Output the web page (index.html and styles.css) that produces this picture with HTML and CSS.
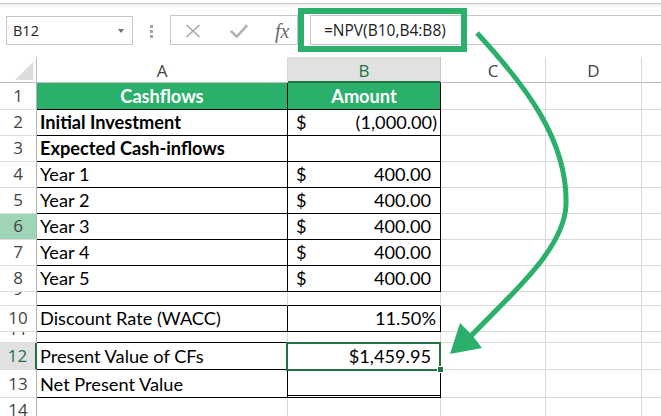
FILE: index.html
```html
<!DOCTYPE html>
<html lang="en">
<head>
<meta charset="utf-8">
<title>NPV</title>
<link rel="stylesheet" href="styles.css">
</head>
<body>
<div class="app">
  <header class="fbar">
    <div class="namebox"><span class="nb-text">B12</span><span class="nb-arrow"></span></div>
    <div class="grip"><i></i><i></i><i></i></div>
    <div class="fbtns">
      <svg class="ico-x" width="16" height="14" viewBox="0 0 16 14"><path d="M1.5 1 L14.5 13 M14.5 1 L1.5 13" fill="none" stroke="#ababab" stroke-width="1.7"/></svg>
      <svg class="ico-ok" width="18" height="14" viewBox="0 0 18 14"><path d="M0.8 7 L6.8 12.6 L17.2 1.2" fill="none" stroke="#b3b3b3" stroke-width="2.6"/></svg>
      <span class="fx">fx</span>
    </div>
    <div class="finput"><span class="ftext">=NPV(B10,B4:B8)</span></div>
    <div class="hl"></div>
  </header>

  <div class="sheet">
    <div class="c ch corner"><span class="tri"></span></div>
    <div class="c ch">A</div>
    <div class="c ch csel">B</div>
    <div class="c ch">C</div>
    <div class="c ch">D</div>
    <div class="c ch"></div>

    <div class="c rh">1</div>
    <div class="c hd">Cashflows</div>
    <div class="c hd">Amount</div>
    <div class="c"></div><div class="c"></div><div class="c"></div>

    <div class="c rh">2</div>
    <div class="c bx bold">Initial Investment</div>
    <div class="c bx acct"><span>$</span><span class="neg">(1,000.00)</span></div>
    <div class="c"></div><div class="c"></div><div class="c"></div>

    <div class="c rh">3</div>
    <div class="c bx bold">Expected Cash-inflows</div>
    <div class="c bx"></div>
    <div class="c"></div><div class="c"></div><div class="c"></div>

    <div class="c rh">4</div>
    <div class="c bx">Year 1</div>
    <div class="c bx acct"><span>$</span><span>400.00</span></div>
    <div class="c"></div><div class="c"></div><div class="c"></div>

    <div class="c rh">5</div>
    <div class="c bx">Year 2</div>
    <div class="c bx acct"><span>$</span><span>400.00</span></div>
    <div class="c"></div><div class="c"></div><div class="c"></div>

    <div class="c rh rhov">6</div>
    <div class="c bx">Year 3</div>
    <div class="c bx acct"><span>$</span><span>400.00</span></div>
    <div class="c"></div><div class="c"></div><div class="c"></div>

    <div class="c rh">7</div>
    <div class="c bx">Year 4</div>
    <div class="c bx acct"><span>$</span><span>400.00</span></div>
    <div class="c"></div><div class="c"></div><div class="c"></div>

    <div class="c rh">8</div>
    <div class="c bx">Year 5</div>
    <div class="c bx acct"><span>$</span><span>400.00</span></div>
    <div class="c"></div><div class="c"></div><div class="c"></div>

    <div class="c rh r9">9</div>
    <div class="c bb"></div>
    <div class="c bb"></div>
    <div class="c"></div><div class="c"></div><div class="c"></div>

    <div class="c rh">10</div>
    <div class="c bx">Discount Rate (WACC)</div>
    <div class="c bx right pct">11.50%</div>
    <div class="c"></div><div class="c"></div><div class="c"></div>

    <div class="c rh">11</div>
    <div class="c bb"></div>
    <div class="c bb"></div>
    <div class="c"></div><div class="c"></div><div class="c"></div>

    <div class="c rh rsel">12</div>
    <div class="c bx">Present Value of CFs</div>
    <div class="c bx right sel">$1,459.95</div>
    <div class="c"></div><div class="c"></div><div class="c"></div>

    <div class="c rh">13</div>
    <div class="c bx">Net Present Value</div>
    <div class="c bx dbl"></div>
    <div class="c"></div><div class="c"></div><div class="c"></div>

    <div class="c rh">14</div>
    <div class="c"></div><div class="c"></div><div class="c"></div><div class="c"></div><div class="c"></div>
  </div>

  <svg class="arrow" width="661" height="416" viewBox="0 0 661 416">
    <path d="M477 33 C 525 85, 568 140, 566 205 C 564 250, 510 295, 468 339" fill="none" stroke="#2ab06b" stroke-width="5"/>
    <polygon points="450,354 460,323 472,335 482,348" fill="#2ab06b"/>
  </svg>
</div>
</body>
</html>
```

FILE: styles.css
```css
html, body {
  margin: 0;
  padding: 0;
  background: #ffffff;
}

.app {
  position: relative;
  width: 661px;
  height: 416px;
  overflow: hidden;
  background: #ffffff;
}

/* ---------- formula bar ---------- */
.fbar {
  box-sizing: border-box;
  height: 54px;
  margin-top: 3px;
  border-top: 1px solid #cfcfcf;
  background: linear-gradient(#ebebeb, #ffffff 4px);
  padding: 11px 0 0 6px;
  display: flex;
  align-items: flex-start;
}

.namebox {
  box-sizing: border-box;
  width: 127px;
  height: 29px;
  margin-top: 1px;
  border: 1px solid #c6c6c6;
  background: #fff;
  display: flex;
  align-items: center;
  padding-left: 6px;
}

.nb-text {
  font-family: "Open Sans", sans-serif;
  font-size: 14.5px;
  color: #222;
}

.nb-arrow {
  margin-left: auto;
  margin-right: 8px;
  width: 0;
  height: 0;
  border-left: 3.5px solid transparent;
  border-right: 3.5px solid transparent;
  border-top: 4px solid #6e6e6e;
}

.grip {
  margin-left: 17px;
  margin-top: 10px;
  display: flex;
  flex-direction: column;
  gap: 2px;
}

.grip i {
  display: block;
  width: 3px;
  height: 3px;
  background: #a3a3a3;
}

.fbtns {
  box-sizing: border-box;
  margin-left: 17px;
  width: 128px;
  height: 30px;
  border: 1px solid #c6c6c6;
  background: #fff;
  display: flex;
  align-items: center;
  padding-left: 14px;
}

.ico-x {
  margin-top: 2px;
}

.ico-ok {
  margin-left: 29px;
  margin-top: 1px;
}

.fx {
  margin-left: 27px;
  font-family: "Liberation Serif", serif;
  font-style: italic;
  font-size: 20px;
  color: #6a6a6a;
  line-height: 20px;
  margin-top: 1px;
}

.finput {
  box-sizing: border-box;
  margin-left: 12px;
  flex: 1;
  height: 30px;
  border: 1px solid #c6c6c6;
  border-right: none;
  background: #fff;
  display: flex;
  align-items: center;
  padding-left: 13px;
}

.ftext {
  font-family: "Open Sans", sans-serif;
  font-size: 15.5px;
  color: #222;
}

.hl {
  position: absolute;
  left: 298px;
  top: 8px;
  width: 169px;
  height: 44px;
  box-sizing: border-box;
  border: 6px solid #2ab06b;
  z-index: 4;
}

/* ---------- sheet grid ---------- */
.sheet {
  display: grid;
  grid-template-columns: 37px 251px 153px 105px 96px 40px;
  grid-template-rows: 26px 27px 26px 26px 26px 26px 26px 26px 26px 14px 26px 11px 27px 28px 26px;
}

.c {
  box-sizing: border-box;
  border-right: 1px solid #d9d9d9;
  border-bottom: 1px solid #d9d9d9;
  display: flex;
  align-items: flex-end;
  padding: 0 3px 3px 3px;
  overflow: hidden;
  white-space: nowrap;
  font-family: Lato, "Liberation Sans", sans-serif;
  font-size: 18.2px;
  line-height: 20px;
  color: #000;
}

.ch {
  justify-content: center;
  font-family: "Open Sans", sans-serif;
  font-size: 17px;
  color: #444;
  padding: 0 0 1px 0;
  border-bottom-color: #bdbdbd;
}

.corner {
  border-right-color: #bdbdbd;
  position: relative;
}

.tri {
  position: absolute;
  left: 15px;
  top: 5px;
  width: 0;
  height: 0;
  border-left: 18px solid transparent;
  border-bottom: 18px solid #dcdcdc;
}

.csel {
  background: #e1e1e1;
  color: #217346;
  border-bottom: 2px solid #217346;
  border-right-color: #c8c8c8;
  padding-bottom: 0;
}

.rh {
  justify-content: center;
  font-family: "Open Sans", sans-serif;
  font-size: 17px;
  color: #444;
  padding: 0 0 3px 0;
  border-right-color: #b5b5b5;
  border-bottom-color: #dedede;
}

.r9 {
  padding-bottom: 6px;
}

.rhov {
  background: #9fd5b7;
}

.rsel {
  background: #e1e1e1;
  color: #217346;
  border-right: 2px solid #217346;
}

.hd {
  background: #2ab06b;
  color: #fff;
  font-weight: 700;
  justify-content: center;
  border-right-color: #000;
  border-bottom-color: #000;
}

.bx {
  border-right-color: #000;
  border-bottom-color: #000;
}

.bb {
  border-bottom-color: #000;
}

.bold {
  font-weight: 700;
}

.acct {
  justify-content: space-between;
  padding-left: 8px;
  padding-right: 9px;
}

.acct .neg {
  margin-right: -6px;
}

.right {
  justify-content: flex-end;
  padding-right: 9px;
}

.pct {
  padding-right: 4px;
}

.dbl {
  border-bottom: 3px double #000;
}

.sel {
  position: relative;
  overflow: visible;
}

.sel::after {
  content: "";
  position: absolute;
  left: -2px;
  top: -1px;
  right: -1px;
  bottom: -2px;
  border: 2px solid #217346;
  z-index: 2;
}

.sel::before {
  content: "";
  position: absolute;
  right: -4px;
  bottom: -4px;
  width: 5px;
  height: 5px;
  background: #217346;
  border: 1px solid #fff;
  z-index: 3;
}

/* ---------- annotation arrow ---------- */
.arrow {
  position: absolute;
  left: 0;
  top: 0;
  z-index: 5;
  pointer-events: none;
}
```
